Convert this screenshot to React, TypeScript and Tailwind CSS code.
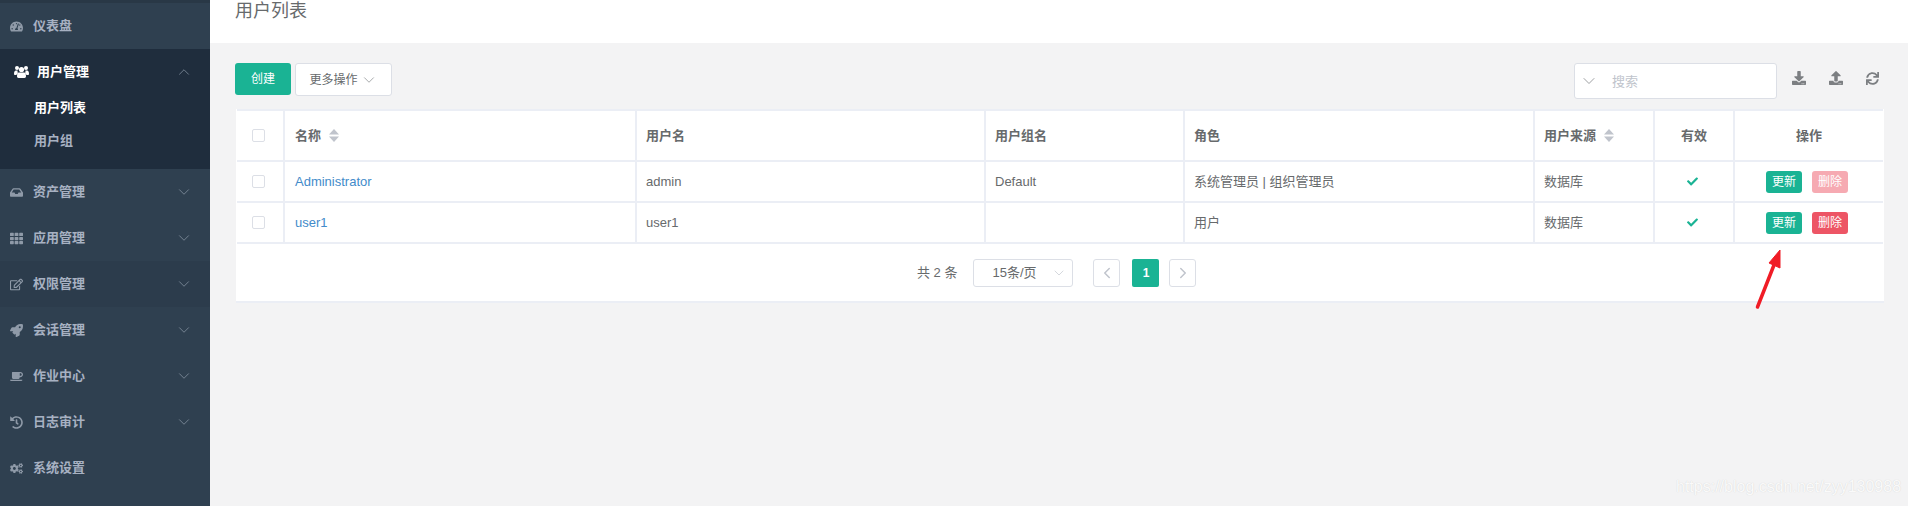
import { ChevronDown, ChevronLeft, ChevronRight, ChevronUp } from "lucide-react";
import type { ComponentType } from "react";
import {
  FaCheck,
  FaCoffee,
  FaCogs,
  FaDownload,
  FaHistory,
  FaInbox,
  FaRegEdit,
  FaRocket,
  FaSync,
  FaTachometerAlt,
  FaTh,
  FaUpload,
} from "react-icons/fa";

const FONT = "font-['Liberation_Sans','Noto_Sans_CJK_SC',sans-serif]";

function UsersIcon() {
  return (
    <svg width="15" height="14" viewBox="0 0 15 14" fill="currentColor">
      <circle cx="3" cy="3" r="2" />
      <circle cx="12" cy="3" r="2" />
      <circle cx="7.5" cy="4.5" r="2.6" />
      <path d="M0 9c0-2 .6-3.4 2-3.4h1.6c-.2 1-.1 1.800.4 2.600C3 8.800 2.500 9.500 2.400 10H.8C.3 10 0 9.600 0 9z" />
      <path d="M15 9c0-2-.6-3.400-2-3.400h-1.600c.2 1 .1 1.800-.4 2.600.9.600 1.400 1.300 1.500 1.800h1.700c.5 0 .8-.4.800-1z" />
      <path d="M4.800 7.500h5.400c1.200 0 1.800 1.600 1.800 3.800 0 1-.6 1.700-1.500 1.700h-6c-.9 0-1.500-.7-1.500-1.700 0-2.200.6-3.800 1.800-3.800z" />
    </svg>
  );
}

function MenuRow({
  icon: Icon,
  label,
  arrow = true,
  hover = false,
}: {
  icon: ComponentType<{ className?: string }>;
  label: string;
  arrow?: boolean;
  hover?: boolean;
}) {
  return (
    <div
      className={`flex h-[46px] items-center pl-[10px] text-[13px] font-semibold text-[#a7b1c2] ${
        hover ? "bg-[#2c3c4c]" : ""
      }`}
    >
      <Icon className="w-[13px] text-[13px] text-[#8f9aa8]" />
      <span className="ml-[10px] flex-1">{label}</span>
      {arrow && <ChevronDown size={18} strokeWidth={1} className="mr-[17px] text-[#8a97a6]" />}
    </div>
  );
}

function Sort() {
  return (
    <svg className="ml-[8px]" width="10" height="13" viewBox="0 0 10 13" fill="#c0c4cc">
      <path d="M5 0 L10 5.500 H0 Z" />
      <path d="M0 7.500 H10 L5 13 Z" />
    </svg>
  );
}

function Checkbox() {
  return <div className="ml-[15px] h-[13px] w-[13px] rounded-[2px] border border-[#dcdfe6] bg-white" />;
}

function UserRow({
  name,
  username,
  group,
  roles,
  canDelete,
}: {
  name: string;
  username: string;
  group: string;
  roles: string;
  canDelete: boolean;
}) {
  const cell = "border-b-2 border-l-2 border-[#ebeef5] px-[9px] text-[13px] text-[#676a6c]";
  return (
    <tr className="h-[41px]">
      <td className="border-b-2 border-[#ebeef5]">
        <Checkbox />
      </td>
      <td className={`${cell} !pl-[10px]`}>
        <span className="text-[#428bca]">{name}</span>
      </td>
      <td className={cell}>{username}</td>
      <td className={cell}>{group}</td>
      <td className={cell}>{roles}</td>
      <td className={cell}>数据库</td>
      <td className={cell}>
        <div className="flex justify-center pr-[3px]">
          <FaCheck className="text-[11px] text-[#1ab394]" />
        </div>
      </td>
      <td className={cell}>
        <div className="flex justify-center gap-[10px] pr-[4px]">
          <span className="flex h-[22px] w-[36px] items-center justify-center rounded-[3px] bg-[#1ab394] text-[12px] text-white">
            更新
          </span>
          <span
            className={`flex h-[22px] w-[36px] items-center justify-center rounded-[3px] text-[12px] text-white ${
              canDelete ? "bg-[#ed5565]" : "bg-[#f6aab2]"
            }`}
          >
            删除
          </span>
        </div>
      </td>
    </tr>
  );
}

export default function App() {
  const head = "border-b-2 border-l-2 border-[#ebeef5] px-[9px] text-left text-[13px] font-bold text-[#676a6c]";

  return (
    <div className={`relative flex h-[506px] w-[1908px] overflow-hidden bg-[#f3f3f4] ${FONT}`}>
      {/* Sidebar */}
      <aside className="w-[210px] shrink-0 bg-[#2f4050]">
        <div className="h-[3px] bg-[#293846]" />
        <MenuRow icon={FaTachometerAlt} label="仪表盘" arrow={false} />
        <div className="bg-[#1f2d3d] pb-[12px]">
          <div className="flex h-[42px] items-center pl-[14px] pt-[4px] text-[13px] font-semibold text-white">
            <UsersIcon />
            <span className="ml-[8px] flex-1">用户管理</span>
            <ChevronUp size={18} strokeWidth={1} className="mr-[17px] text-[#8a97a6]" />
          </div>
          <div className="flex h-[33px] items-center pl-[34px] text-[13px] font-bold text-white">用户列表</div>
          <div className="flex h-[33px] items-center pl-[34px] text-[13px] font-semibold text-[#a7b1c2]">用户组</div>
        </div>
        <MenuRow icon={FaInbox} label="资产管理" />
        <MenuRow icon={FaTh} label="应用管理" />
        <MenuRow icon={FaRegEdit} label="权限管理" hover />
        <MenuRow icon={FaRocket} label="会话管理" />
        <MenuRow icon={FaCoffee} label="作业中心" />
        <MenuRow icon={FaHistory} label="日志审计" />
        <MenuRow icon={FaCogs} label="系统设置" arrow={false} />
      </aside>

      {/* Main */}
      <main className="flex min-w-0 flex-1 flex-col">
        <div className="h-[43px] bg-white pl-[25px] text-[18px] leading-[22px] text-[#676a6c]">用户列表</div>

        <div className="pl-[25px] pr-[24px] pt-[20px]">
          {/* Toolbar */}
          <div className="flex h-[36px] items-start text-[12px]">
            <button className="flex h-[32px] w-[56px] items-center justify-center rounded-[3px] bg-[#1ab394] text-white">
              创建
            </button>
            <button className="ml-[4px] flex h-[33px] w-[97px] items-center justify-center gap-[2px] rounded-[3px] border border-[#dcdfe6] bg-white text-[#676a6c]">
              更多操作
              <ChevronDown size={18} strokeWidth={1} className="text-[#8a8d90]" />
            </button>
            <div className="ml-auto flex h-[36px] w-[203px] items-center rounded-[3px] border border-[#dcdfe6] bg-white pl-[4px] text-[13px] text-[#c0c4cc]">
              <ChevronDown size={20} strokeWidth={1} className="text-[#8a8d90]" />
              <span className="ml-[13px] pt-[1px]">搜索</span>
            </div>
            <div className="ml-[15px] mr-[5px] flex h-[30px] items-center gap-[23px] text-[14px] text-[#7c7f82]">
              <FaDownload />
              <FaUpload />
              <FaSync className="text-[13px]" />
            </div>
          </div>

          {/* Table card */}
          <div className="ml-[1px] mt-[10px] w-[1648px] border-b-2 border-[#ebeef5] bg-white pb-[14px]">
            <table className="mx-[1px] w-[1646px] table-fixed border-collapse border-t-2 border-[#ebeef5]">
              <colgroup>
                <col className="w-[47px]" />
                <col className="w-[352px]" />
                <col className="w-[349px]" />
                <col className="w-[199px]" />
                <col className="w-[350px]" />
                <col className="w-[120px]" />
                <col className="w-[80px]" />
                <col className="w-[149px]" />
              </colgroup>
              <thead>
                <tr className="h-[51px]">
                  <th className="border-b-2 border-[#ebeef5]">
                    <Checkbox />
                  </th>
                  <th className={`${head} !pl-[10px]`}>
                    <div className="flex items-center">
                      名称
                      <Sort />
                    </div>
                  </th>
                  <th className={head}>用户名</th>
                  <th className={head}>用户组名</th>
                  <th className={head}>角色</th>
                  <th className={head}>
                    <div className="flex items-center">
                      用户来源
                      <Sort />
                    </div>
                  </th>
                  <th className={`${head} !text-center`}>有效</th>
                  <th className={`${head} !text-center`}>操作</th>
                </tr>
              </thead>
              <tbody>
                <UserRow name="Administrator" username="admin" group="Default" roles="系统管理员 | 组织管理员" canDelete={false} />
                <UserRow name="user1" username="user1" group="" roles="用户" canDelete />
              </tbody>
            </table>

            {/* Pagination */}
            <div className="mt-[15px] flex h-[28px] items-center pl-[681px] text-[13px] text-[#676a6c]">
              <span>共 2 条</span>
              <div className="ml-[16px] flex h-[28px] w-[100px] items-center rounded-[3px] border border-[#dcdfe6] pl-[18px]">
                <span className="flex-1">15条/页</span>
                <ChevronDown size={16} strokeWidth={1} className="mr-[5px] text-[#c0c4cc]" />
              </div>
              <div className="ml-[20px] flex h-[28px] w-[27px] items-center justify-center rounded-[3px] border border-[#dcdfe6] text-[#c0c4cc]">
                <ChevronLeft size={18} strokeWidth={2} />
              </div>
              <div className="ml-[12px] flex h-[28px] w-[27px] items-center justify-center rounded-[2px] bg-[#1ab394] text-[12px] font-bold text-white">
                1
              </div>
              <div className="ml-[10px] flex h-[28px] w-[27px] items-center justify-center rounded-[3px] border border-[#dcdfe6] text-[#c0c4cc]">
                <ChevronRight size={18} strokeWidth={2} />
              </div>
            </div>
          </div>
        </div>
      </main>

      {/* Annotation arrow drawn over the screenshot */}
      <svg className="absolute left-[1750px] top-[245px]" width="40" height="70" viewBox="0 0 40 70">
        <path d="M7.500 62 L24 20" stroke="#f01c26" strokeWidth="3.500" strokeLinecap="round" />
        <path d="M30 5 L19 18 L30 23 Z" fill="#f01c26" stroke="#f01c26" strokeWidth="1" />
      </svg>

      {/* Watermark */}
      <span className="absolute left-[1676px] top-[478px] text-[16px] leading-[18px] text-[#fafafa] [text-shadow:0_0_1px_#cfcfcf]">
        https://blog.csdn.net/zyy130988
      </span>
    </div>
  );
}
